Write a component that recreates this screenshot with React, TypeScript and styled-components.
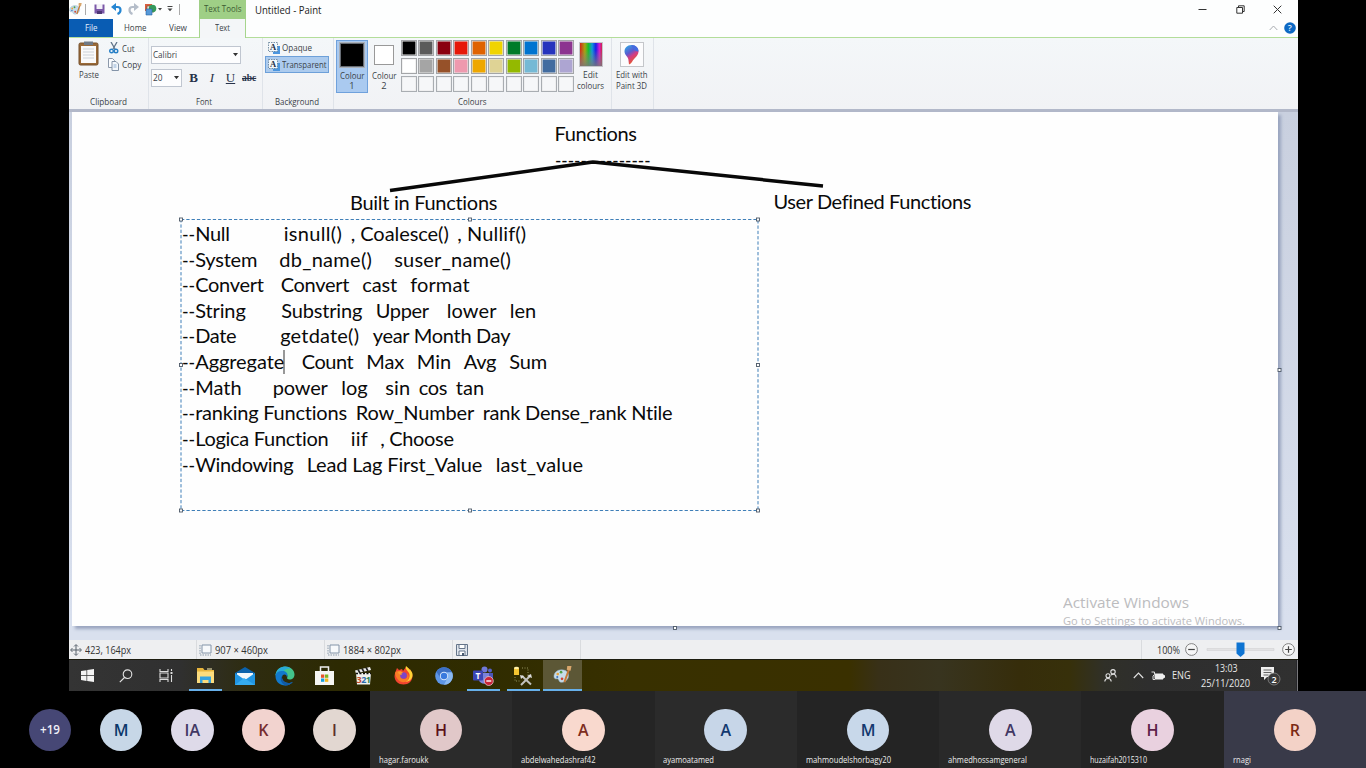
import React, { useLayoutEffect, useRef } from 'react';
import styled, { createGlobalStyle, css } from 'styled-components';

const Global = createGlobalStyle`
  * { box-sizing: border-box; }
  html, body { margin: 0; background: #000; overflow: hidden; }
  body { font-family: "Open Sans", "Noto Sans", sans-serif; font-size: 10px; color: #3a3f47; }
  svg { display: block; flex: none; }
`;

const FitBox = styled.span<{ $w: number }>`
  display: inline-block;
  width: ${(p) => p.$w}px;
  text-align: left;
  white-space: pre;
  flex: none;
`;
const FitSpan = styled.span`
  display: inline-block;
  white-space: pre;
  transform-origin: 0 50%;
`;

/* Text condensed or widened so that it takes exactly the given width. */
function Fit({ w, children }: { w: number; children: string }) {
  const ref = useRef<HTMLSpanElement>(null);
  useLayoutEffect(() => {
    const el = ref.current;
    if (!el) return;
    el.style.transform = 'none';
    el.style.transform = `scaleX(${w / el.getBoundingClientRect().width})`;
  }, [w, children]);
  return <FitBox $w={w}><FitSpan ref={ref}>{children}</FitSpan></FitBox>;
}

/* Text tracked so that it takes exactly the given width. */
function Tracked({ w, children }: { w: number; children: string }) {
  const ref = useRef<HTMLSpanElement>(null);
  useLayoutEffect(() => {
    const el = ref.current;
    if (!el) return;
    el.style.letterSpacing = '0px';
    const natural = el.getBoundingClientRect().width;
    el.style.letterSpacing = `${(w - natural) / children.length}px`;
  }, [w, children]);
  return <FitSpan ref={ref}>{children}</FitSpan>;
}

const Screen = styled.div`
  width: 1366px;
  height: 768px;
  display: flex;
  flex-direction: column;
  background: #000;
  overflow: hidden;
`;
const Desktop = styled.div`
  width: 1229px;
  height: 691px;
  margin-left: 69px;
  display: flex;
  flex-direction: column;
  flex: none;
  background: #fdfefe;
`;

/* ---- title bar and tabs ---- */
const Header = styled.div`
  display: flex;
  height: 38px;
  border-bottom: 1.5px solid #b3dd9a;
  flex: none;
`;
const HeaderLeft = styled.div`
  width: 130px;
  display: flex;
  flex-direction: column;
`;
const QuickBar = styled.div`
  height: 19px;
  display: flex;
  align-items: center;
`;
const QuickIcon = styled.div<{ $w: number }>`
  width: ${(p) => p.$w}px;
  display: flex;
  justify-content: center;
`;
const TabRow = styled.div`
  display: flex;
  height: 19px;
`;
const Tab = styled.div<{ $w: number; $file?: boolean }>`
  width: ${(p) => p.$w}px;
  height: 18px;
  display: flex;
  align-items: center;
  justify-content: center;
  font-size: 9.5px;
  ${(p) => p.$file && css`background: #095cb3; color: #e4effa;`}
`;
const ContextTab = styled.div`
  width: 47px;
  height: 38px;
  display: flex;
  flex-direction: column;
  text-align: center;
  flex: none;
`;
const ContextTitle = styled.div`
  height: 19px;
  line-height: 18px;
  background: #9fcf86;
  color: #3d5b33;
  font-size: 9.5px;
`;
const ContextName = styled.div`
  height: 19px;
  line-height: 18px;
  background: #f4f6f8;
  border: 1px solid #a6d58d;
  border-width: 0 1px;
  font-size: 9.5px;
`;
const Caption = styled.div`
  flex: 1;
  padding: 0 0 0 9px;
  line-height: 20px;
  font-size: 10.5px;
  color: #222;
`;
const WindowSide = styled.div`
  width: 104px;
  display: flex;
  flex-direction: column;
`;
const WindowButtons = styled.div`
  height: 19px;
  display: flex;
  justify-content: space-between;
  align-items: center;
  padding: 0 16px 0 4px;
`;
const HelpRow = styled.div`
  height: 18px;
  display: flex;
  justify-content: flex-end;
  align-items: center;
  gap: 6px;
  padding-right: 2.5px;
`;

/* ---- ribbon ---- */
const Ribbon = styled.div`
  height: 71px;
  display: flex;
  background: linear-gradient(#f4f7f9, #f1f2f5);
  flex: none;
`;
const Group = styled.div<{ $w: number }>`
  width: ${(p) => p.$w}px;
  border-right: 1px solid #dfe3e9;
  display: flex;
  flex-direction: column;
`;
const GroupBody = styled.div<{ $pad?: string }>`
  flex: 1;
  display: flex;
  padding: ${(p) => p.$pad ?? '2px 0 0'};
`;
const GroupLabel = styled.div<{ $shift?: number }>`
  height: 13px;
  line-height: 12px;
  text-align: center;
  font-size: 9.3px;
  margin-left: ${(p) => p.$shift ?? 0}px;
`;
const Column = styled.div<{ $w?: number; $gap?: number; $center?: boolean }>`
  width: ${(p) => (p.$w ? p.$w + 'px' : 'auto')};
  display: flex;
  flex-direction: column;
  gap: ${(p) => p.$gap ?? 0}px;
  align-items: ${(p) => (p.$center ? 'center' : 'stretch')};
  flex: none;
`;
const PasteLabel = styled.div`
  line-height: 17px;
  font-size: 9.5px;
`;
const SmallCommand = styled.div<{ $indent: number }>`
  display: flex;
  align-items: center;
  gap: 3px;
  height: 16px;
  padding-left: ${(p) => p.$indent}px;
  font-size: 9.5px;
`;
const BackgroundOption = styled.div<{ $on?: boolean }>`
  width: 64px;
  height: 17px;
  display: flex;
  align-items: center;
  gap: 1px;
  padding-left: 1px;
  font-size: 9.5px;
  border: 1px solid ${(p) => (p.$on ? '#6da0d9' : 'transparent')};
  background: ${(p) => (p.$on ? '#accbee' : 'transparent')};
`;
const Select = styled.div<{ $w: number }>`
  width: ${(p) => p.$w}px;
  height: 18px;
  border: 1px solid #c0c6d0;
  background: #fdfdfe;
  display: flex;
  align-items: center;
  justify-content: space-between;
  padding: 0 2px 1px 1px;
  font-size: 9.8px;
`;
const FontRow = styled.div`
  display: flex;
  align-items: center;
`;
const StyleKey = styled.span<{ $w: number; $kind: string }>`
  width: ${(p) => p.$w}px;
  text-align: center;
  font-family: "Liberation Serif", serif;
  font-size: 13px;
  color: #27324a;
  font-weight: ${(p) => (p.$kind === 'b' ? 700 : 400)};
  font-style: ${(p) => (p.$kind === 'i' ? 'italic' : 'normal')};
  ${(p) => p.$kind === 'u' && css`text-decoration: underline;`}
  ${(p) => p.$kind === 's' && css`font-size: 9.5px; font-weight: 700; text-decoration: line-through;`}
`;
const ColourButton = styled.div<{ $on?: boolean }>`
  width: 32px;
  height: 53px;
  border: 1px solid ${(p) => (p.$on ? '#6fa1dc' : 'transparent')};
  background: ${(p) => (p.$on ? '#aacaf0' : 'transparent')};
  display: flex;
  flex-direction: column;
  align-items: center;
  font-size: 9.3px;
  line-height: 10.7px;
  text-align: center;
  flex: none;
`;
const SwatchSlot = styled.div`
  height: 27px;
  display: flex;
  align-items: center;
  margin-bottom: 2.5px;
`;
const BigSwatch = styled.div<{ $s: number; $c: string; $edge: string }>`
  width: ${(p) => p.$s}px;
  height: ${(p) => p.$s}px;
  background: ${(p) => p.$c};
  border: 1px solid ${(p) => p.$edge};
  outline: ${(p) => (p.$s > 20 ? '1px solid #aab0b8' : 'none')};
`;
const Palette = styled.div`
  width: 174px;
  height: 52px;
  display: grid;
  grid-template: repeat(3, 1fr) / repeat(10, 1fr);
  gap: 1.6px 1.5px;
  margin: 0 1px 0 0.5px;
  flex: none;
`;
const Swatch = styled.div<{ $c?: string }>`
  border: 1px solid ${(p) => (p.$c ? '#a3a5a8' : '#a9adb2')};
  background: ${(p) => p.$c ?? '#f6f7f9'};
  box-shadow: inset 0 0 0 0.6px #e8e8e8;
`;
const TileCommand = styled.div<{ $w: number }>`
  width: ${(p) => p.$w}px;
  display: flex;
  flex-direction: column;
  align-items: center;
  font-size: 9.3px;
  line-height: 10.7px;
  text-align: center;
`;
const IconFrame = styled.div`
  width: 24px;
  height: 25px;
  margin: 2px 0 3px;
  border: 1px solid #c4c6ca;
  background: #fcfcfd;
  display: flex;
  align-items: center;
  justify-content: center;
`;

/* ---- drawing surface ---- */
const Work = styled.div`
  height: 531px;
  position: relative;
  background: linear-gradient(#c9d0df, #d9e0ee 96%);
  border-top: 3px solid #b2b8c9;
  padding-left: 3px;
  flex: none;
`;
const Paper = styled.div`
  width: 1206px;
  height: 514px;
  position: relative;
  background: #fefefe;
  box-shadow: 3px 3px 3px #9aa5bf;
  font-family: Lato, "Open Sans", sans-serif;
  font-size: 20px;
  line-height: 25.6px;
  color: #0a0a0a;
`;
const Sketch = styled.svg`
  position: absolute;
  left: 0;
  top: 0;
  overflow: visible;
`;
const Placed = styled.div<{ $x: number; $y: number }>`
  position: absolute;
  left: ${(p) => p.$x - 72}px;
  top: ${(p) => p.$y - 113}px;
  white-space: pre;
`;
const Watermark = styled.div`
  position: absolute;
  left: 991px;
  top: 480px;
  height: 34px;
  overflow: hidden;
  color: #bcbcbe;
  font-family: "Open Sans", sans-serif;
  font-size: 15px;
  line-height: 20px;
`;
const WatermarkSub = styled.div`
  font-size: 11.3px;
  line-height: 18px;
`;

/* ---- status bar ---- */
const Status = styled.div`
  height: 19px;
  display: flex;
  background: #eeeff1;
  font-size: 10.2px;
  color: #333;
  flex: none;
`;
const StatusCell = styled.div<{ $w?: number; $pad?: number }>`
  ${(p) => (p.$w ? `width: ${p.$w}px;` : 'flex: 1;')}
  padding-left: ${(p) => p.$pad ?? 3}px;
  border-right: 1px solid #d9dbde;
  display: flex;
  align-items: center;
  gap: 3px;
`;
const Zoom = styled.div`
  width: 156px;
  display: flex;
  align-items: center;
  gap: 5px;
  padding-left: 14.5px;
`;

/* ---- taskbar ---- */
const Taskbar = styled.div`
  height: 32px;
  display: flex;
  background: linear-gradient(90deg, #343434 0, #303030 110px, #2e2c10 180px, #2d2a02 270px, #302c00 420px, #383000 560px, #3a3000 780px, #383018 810px, #38341f 870px, #362d0b 950px, #37300a 1000px, #303028 1035px, #2e2e2e 1080px, #303030);
  border-top: 1px solid #1c1c10;
  flex: none;
`;
const TaskItem = styled.div<{ $w: number; $active?: boolean; $line?: number }>`
  width: ${(p) => p.$w}px;
  height: 31px;
  display: flex;
  flex-direction: column;
  align-items: center;
  justify-content: space-between;
  background: ${(p) => (p.$active ? '#5c5736' : 'transparent')};
  &::after {
    content: '';
    width: ${(p) => p.$line ?? 0}px;
    height: 2px;
    background: #67b0ea;
  }
`;
const TaskIcon = styled.div`
  height: 31px;
  margin-bottom: -2px;
  display: flex;
  align-items: center;
`;
const Tray = styled.div`
  margin-left: auto;
  width: 195px;
  display: flex;
  align-items: center;
  color: #e8e8e8;
  font-size: 10px;
  border-right: 1px solid #26262a;
`;
const TraySlot = styled.div<{ $w: number }>`
  width: ${(p) => p.$w}px;
  display: flex;
  justify-content: center;
  line-height: 14.5px;
  text-align: center;
`;
const PeekEdge = styled.div`
  width: 1px;
  height: 31px;
  background: #77777a;
`;

/* ---- meeting participants ---- */
const People = styled.div`
  height: 77px;
  display: flex;
  flex: none;
`;
const Overflow = styled.div`
  width: 370px;
  display: flex;
  padding-left: 14.5px;
`;
const PersonSlot = styled.div`
  width: 71.1px;
  display: flex;
  justify-content: center;
  padding-top: 17.5px;
`;
const Tile = styled.div<{ $bg: string }>`
  width: 142.3px;
  background: ${(p) => p.$bg};
  display: flex;
  flex-direction: column;
  align-items: center;
  padding-top: 17.5px;
  flex: none;
`;
const Avatar = styled.div<{ $bg: string; $fg: string; $small?: boolean }>`
  width: 42.6px;
  height: 42.6px;
  border-radius: 50%;
  background: ${(p) => p.$bg};
  color: ${(p) => p.$fg};
  display: flex;
  align-items: center;
  justify-content: center;
  font-size: ${(p) => (p.$small ? 12 : 16)}px;
  font-weight: 600;
  flex: none;
`;
const PersonName = styled.div`
  align-self: flex-start;
  padding-left: 8.8px;
  font-size: 8.6px;
  line-height: 18px;
  color: #ececec;
`;

const palette = [
  '#000000', '#5b5b5b', '#8a0010', '#e61809', '#df6200', '#f0d400', '#007b29', '#0074d0', '#2634bd', '#8c3490',
  '#ffffff', '#a5a5a5', '#965129', '#ee99ae', '#eea700', '#dfd395', '#94b900', '#75b9d5', '#426ca0', '#ada5d2',
];

type Chunk = [number, number, string];
const lines: Chunk[][] = [
  [[195.5, 229.5, 'Null'], [284, 342, 'isnull()'], [351, 448.5, ', Coalesce()'], [457.5, 526, ', Nullif()']],
  [[195.5, 257, 'System'], [279.5, 372, 'db_name()'], [394.5, 511, 'suser_name()']],
  [[195.5, 263.5, 'Convert'], [281, 349, 'Convert'], [362.5, 397, 'cast'], [410.5, 469.5, 'format']],
  [[195.5, 245.5, 'String'], [281.5, 362, 'Substring'], [376, 428.5, 'Upper'], [447, 496.5, 'lower'], [510, 536, 'len']],
  [[195.5, 236, 'Date'], [280.5, 359, 'getdate()'], [373, 510, 'year Month Day']],
  [[195.5, 284, 'Aggregate'], [302, 353, 'Count'], [366.5, 404, 'Max'], [417, 451, 'Min'], [464, 496, 'Avg'], [509.5, 547, 'Sum']],
  [[195.5, 241.5, 'Math'], [273, 327.5, 'power'], [341.5, 367.5, 'log'], [385.5, 410, 'sin'], [419, 447, 'cos'], [456, 484, 'tan']],
  [[195.5, 347, 'ranking Functions'], [356, 474, 'Row_Number'], [483, 672.5, 'rank Dense_rank Ntile']],
  [[195.5, 328.5, 'Logica Function'], [351, 368, 'iif'], [380.5, 453.5, ', Choose']],
  [[195.5, 293, 'Windowing'], [307, 482, 'Lead Lag First_Value'], [496, 583, 'last_value']],
];

const PaletteIcon = ({ s }: { s: number }) => (
  <svg width={s} height={s} viewBox="0 0 20 20">
    <path d="M9 4C4 4 1 7.500 1 11c0 2 1.500 3 3 2.500S6 15 7 16.500c1 1 4 1 6-.5 3-2 4-5 3-8S12 4 9 4z" fill="#c5dceb" stroke="#8fb0c4" strokeWidth=".6" />
    <circle cx="5" cy="8.500" r="1.400" fill="#e9a33c" /><circle cx="8.500" cy="6.500" r="1.400" fill="#51a04a" />
    <circle cx="4.500" cy="11.500" r="1.100" fill="#3970c0" /><circle cx="9.500" cy="13.500" r="1.400" fill="#cf4433" />
    <path d="M17 3 12 17" stroke="#c77a37" strokeWidth="2" /><path d="M15 0h4.500l-1 5-4-1z" fill="#d8a66c" />
  </svg>
);
const UndoIcon = ({ c, flip }: { c: string; flip?: boolean }) => (
  <svg width="11" height="12" viewBox="0 0 11 12"><g transform={flip ? 'translate(11 0) scale(-1 1)' : undefined}>
    <path d="M3 4h3.500c4 0 4 5.500 0 7" fill="none" stroke={c} strokeWidth="2.200" /><path d="M0 4 5 0v8z" fill={c} />
  </g></svg>
);
const Caret = () => <svg width="5" height="4" viewBox="0 0 5 4"><path d="M0 0h5L2.500 3.200z" fill="#333" /></svg>;
const LetterPic = () => (
  <svg width="14" height="14" viewBox="0 0 14 14">
    <path d="M6 5h7v8H6z" fill="#4b96df" />
    <path d="M1.500 1.500h9v9h-9z" fill="#f4f8fb" stroke="#5c7893" strokeWidth=".8" strokeDasharray="1.500 1" />
    <text x="3" y="9" fontFamily="Liberation Serif" fontWeight="700" fontSize="8.500" fill="#1d304a">A</text>
  </svg>
);
const SizeIcon = () => (
  <svg width="13" height="12" viewBox="0 0 13 12"><path d="M3 1h9v8H3z" fill="#f7f9fb" stroke="#8394a8" /><path d="M1 1v10h11" fill="none" stroke="#8b9aab" strokeDasharray="1.500 1" /></svg>
);
const ZoomButton = ({ plus }: { plus?: boolean }) => (
  <svg width="13" height="13" viewBox="0 0 13 13"><circle cx="6.500" cy="6.500" r="5.900" fill="#f6f6f6" stroke="#777" strokeWidth=".9" /><path d={plus ? 'M3.200 6.500h6.600M6.500 3.200v6.600' : 'M3.200 6.500h6.600'} stroke="#444" strokeWidth="1.200" /></svg>
);

const StartIcon = () => <svg width="13" height="13" viewBox="0 0 13 13"><path d="M0 2l5.500-.8v5H0zM6.200 1.100 13 0v6.200H6.200zM0 6.900h5.500v5L0 11.100zM6.200 6.900H13V13l-6.800-1z" fill="#f4f4f4" /></svg>;
const SearchIcon = () => <svg width="14" height="14" viewBox="0 0 14 14" fill="none" stroke="#e4e4e4" strokeWidth="1.100"><circle cx="8.500" cy="5.200" r="4.300" /><path d="M5.500 8.500.8 13.200" /></svg>;
const TaskViewIcon = () => <svg width="14" height="13" viewBox="0 0 14 13" fill="none" stroke="#dcdcdc" strokeWidth="1.100"><path d="M1 0v2.500h8V0M1 13v-2.500h8V13M1 4h8v5H1zM12.500 0v2M12.500 6v7" /><path d="M11.500 4h2" strokeWidth="2" /></svg>;
const ExplorerIcon = () => (
  <svg width="19" height="17" viewBox="0 0 19 17"><path d="M1 1h6l1.500 2H18v13H1z" fill="#e8b53c" /><path d="M1 4.500h17V16H1z" fill="#fbdc7d" /><path d="M4 16V9.500h11V16h-2.500v-3h-6v3z" fill="#35a3df" /><path d="M11 2h5" stroke="#fff1b5" /></svg>
);
const MailIcon = () => <svg width="20" height="18" viewBox="0 0 20 18"><path d="M0 6 10 0l10 6v11H0z" fill="#0b62ac" /><path d="M2 6h16v6H2z" fill="#f2f7fb" /><path d="M0 6l10 7 10-7v12H0z" fill="#2196e3" /><path d="M0 18 9 11l11 7z" fill="#35acf1" /></svg>;
const EdgeIcon = () => (
  <svg width="20" height="20" viewBox="0 0 20 20">
    <path d="M.5 10C.5 4 5 .5 10 .5c6 0 9.500 4 9.500 8 0 3-2 5-5 5-2 0-3-1-2.200-2.200C13 9 11 6.500 8 6.500c-4 0-7 1.500-7.500 3.500z" fill="#43c48c" />
    <path d="M.5 10C1 4 5 .5 10 .5c2.500 0 4.500.8 6 2C12 2 9 3 8 6.500 4 6.500 1 8 .5 10z" fill="#28a9d7" />
    <path d="M.5 10C1 6 4 5 7.500 5c3 0 5.500 2 5 5l-.7 1C12 8.500 9 7.500 7.500 9.500c-1.800 3 1.500 7.500 6 7.500 2 0 3.500-.7 4.700-1.300C16 18 13.500 19.500 10 19.500 5 19.500.5 16 .5 10z" fill="#1279cb" />
    <path d="M7.500 9.500c-1.800 3 1.500 7.500 6 7.500 2 0 3.500-.7 4.700-1.300C16 18 13.500 19.500 10.500 19.500 5.500 17.500 4.500 12 7.500 9.500z" fill="#115ba7" />
  </svg>
);
const StoreIcon = () => (
  <svg width="19" height="19" viewBox="0 0 19 19"><path d="M5.500 6V1h8v5" fill="none" stroke="#f0f0f0" strokeWidth="1.500" /><path d="M0 5h19v14H0z" fill="#f5f5f3" />
    <path d="M6 8.500h3.300v3.300H6z" fill="#e6532b" /><path d="M10 8.500h3.300v3.300H10z" fill="#7db51f" /><path d="M6 12.500h3.300v3.300H6z" fill="#169edb" /><path d="M10 12.500h3.300v3.300H10z" fill="#f5b51b" /></svg>
);
const ClapperIcon = () => (
  <svg width="18" height="18" viewBox="0 0 18 18"><path d="M1 6h15l-1 11.500H2z" fill="#f0f0ec" /><path d="M0 3.500 15 0l1 3L1 6.500z" fill="#ececec" /><path d="m3 2.500 2 3.500M7 1.500l2 3.500M11 .5l2 3.500" stroke="#222" strokeWidth="1.600" /><path d="M1 6.500h15" stroke="#111" strokeWidth="1.500" strokeDasharray="2 1.500" />
    <text x="1.600" y="15.800" fontFamily="Open Sans" fontWeight="700" fontSize="9" fill="#c34a2b">3</text><text x="6.300" y="15.800" fontFamily="Open Sans" fontWeight="700" fontSize="9" fill="#2b6cae">2</text><text x="10.700" y="15.800" fontFamily="Open Sans" fontWeight="700" fontSize="9" fill="#2c8152">1</text></svg>
);
const FirefoxIcon = () => (
  <svg width="19" height="19" viewBox="0 0 19 19"><path d="M1 7 3 2l2 2 3-1 1 2 3-4c3 1 5 3 6 6l.5 3c0 5-4 8.500-9 8.500S.5 15 .5 10z" fill="#f2452f" /><path d="M12 0c-1 3 1 4 3 7 2 4-1 8-4 9 5 0 8-4 7.500-8-.5-3-2-3-2.500-5-.5 1-.5 1-.5 1C15 2 13 1 12 0z" fill="#ffd335" /><path d="M1 7c1-2 3-3 6-1-1 1-1 2 1 2-2 1-1 5 2 5s4-3 3-6c3 3 2 8-2 9-5 1-9-3-10-9z" fill="#f97d25" /><circle cx="9.500" cy="9.500" r="3.300" fill="#7c46c8" /><path d="M4 6c1-1 4-1 5 1-2 0-2 1-1 2-2 0-4-1-4-3z" fill="#ff9c2a" /></svg>
);
const ChromiumIcon = () => (
  <svg width="18" height="18" viewBox="0 0 18 18"><circle cx="9" cy="9" r="8.800" fill="#5d96e6" /><path d="M9 .2A8.800 8.800 0 0 0 1.300 4.800L5.500 11 9 5h7.800A8.800 8.800 0 0 0 9 .2z" fill="#3c70c4" /><path d="M9 17.800 12.500 11 13 9l-.8-3.500h4.900A8.800 8.800 0 0 1 9 17.800z" fill="#8ab9f2" /><circle cx="9" cy="9" r="4.200" fill="#d5e5fa" /><circle cx="9" cy="9" r="3.200" fill="#397ade" /></svg>
);
const TeamsIcon = () => (
  <svg width="21" height="20" viewBox="0 0 21 20"><circle cx="11.500" cy="3.500" r="3" fill="#6f78d8" /><circle cx="17" cy="4.500" r="2" fill="#5661c8" /><path d="M14 7h6v7l-3 2h-3z" fill="#4c56b8" /><path d="M6 7h10v7c0 5-9 5-10 0z" fill="#7a82dc" /><rect x="0" y="4.500" width="10" height="10" rx="1" fill="#3a45b4" /><text x="2.600" y="12.500" fontFamily="Open Sans" fontWeight="700" fontSize="8.500" fill="#fff">T</text><circle cx="15.800" cy="15" r="4.500" fill="#c9243a" stroke="#e6d5d8" strokeWidth=".7" /><path d="M13.300 15h5" stroke="#fff" strokeWidth="1.400" /></svg>
);
const ServerIcon = () => (
  <svg width="20" height="20" viewBox="0 0 20 20"><path d="M1 2h5v7H1z" fill="#f4c431" /><ellipse cx="3.500" cy="2" rx="2.500" ry="1.200" fill="#fff0a6" /><path d="M9 2h6v7M2 11v4h5" fill="none" stroke="#93935d" strokeDasharray="1 1.500" /><path d="m9 10 9 8.500M17 10 8 19" stroke="#c2c2bd" strokeWidth="2" /><path d="m14 10 4-2 1 4M7 9l4 1-3 3z" fill="#ddd" /></svg>
);

export default function App() {
  return (
    <>
      <Global />
      <Screen>
        <Desktop>
          <Header>
            <HeaderLeft>
              <QuickBar>
                <QuickIcon $w={13}><PaletteIcon s={13} /></QuickIcon>
                <QuickIcon $w={6}><svg width="1" height="11"><path d="M.5 0v11" stroke="#aaa" /></svg></QuickIcon>
                <QuickIcon $w={23}><svg width="11" height="10" viewBox="0 0 11 10"><path d="M.5.5h10v9H.5z" fill="#7b58a8" /><path d="M2.500 0h6v5h-6z" fill="#f4f2f8" /><path d="M3 7h5v3H3z" fill="#4d3774" /></svg></QuickIcon>
                <QuickIcon $w={11}><UndoIcon c="#2586d2" /></QuickIcon>
                <QuickIcon $w={22}><UndoIcon c="#b4bdc9" flip /></QuickIcon>
                <QuickIcon $w={12}><svg width="13" height="13" viewBox="0 0 13 13"><path d="M1 1h7v7H1z" fill="#d95e3e" /><path d="M3 3h7v6H3z" fill="#f3eee8" stroke="#77513e" strokeWidth=".7" /><circle cx="8.500" cy="5.500" r="3.800" fill="#35995b" /><path d="M2 6h6v6H2z" fill="#5598d8" stroke="#2965a5" strokeWidth=".6" /></svg></QuickIcon>
                <QuickIcon $w={7}><svg width="4" height="3" viewBox="0 0 4 3"><path d="M0 0h4L2 2.500z" fill="#444" /></svg></QuickIcon>
                <QuickIcon $w={13}><svg width="6" height="6" viewBox="0 0 6 6"><path d="M.5.5h5" stroke="#444" /><path d="M.5 2.500h5L3 5.300z" fill="#444" /></svg></QuickIcon>
                <QuickIcon $w={7}><svg width="1" height="11"><path d="M.5 0v11" stroke="#aaa" /></svg></QuickIcon>
              </QuickBar>
              <TabRow>
                <Tab $w={44} $file><Fit w={12.5}>File</Fit></Tab>
                <Tab $w={44}><Fit w={22.5}>Home</Fit></Tab>
                <Tab $w={41}><Fit w={18}>View</Fit></Tab>
              </TabRow>
            </HeaderLeft>
            <ContextTab>
              <ContextTitle><Fit w={37.5}>Text Tools</Fit></ContextTitle>
              <ContextName><Fit w={15}>Text</Fit></ContextName>
            </ContextTab>
            <Caption><Fit w={66.500}>Untitled - Paint</Fit></Caption>
            <WindowSide>
              <WindowButtons>
                <svg width="9" height="9" viewBox="0 0 9 9"><path d="M.5 4.500h8" stroke="#333" /></svg>
                <svg width="9" height="9" viewBox="0 0 9 9" fill="none" stroke="#333"><path d="M.8 2.500h5.700v5.700H.8zM2.500 2.500V.8h5.700v5.700H6.500" /></svg>
                <svg width="9" height="9" viewBox="0 0 9 9"><path d="m.7.7 7.600 7.600m0-7.600L.7 8.300" stroke="#333" /></svg>
              </WindowButtons>
              <HelpRow>
                <svg width="9" height="6" viewBox="0 0 9 6"><path d="m.7 5 3.800-4 3.800 4" fill="none" stroke="#a7abb0" /></svg>
                <svg width="12" height="12" viewBox="0 0 12 12"><circle cx="6" cy="6" r="5.800" fill="#0d69c4" /><text x="3.700" y="9.200" fontFamily="Open Sans" fontWeight="600" fontSize="9" fill="#e4f0fa">?</text></svg>
              </HelpRow>
            </WindowSide>
          </Header>

          <Ribbon>
            <Group $w={80}>
              <GroupBody $pad="2px 0 0 8px">
                <Column $w={23} $center>
                  <svg width="21" height="26" viewBox="0 0 21 26"><rect x="1" y="3" width="19" height="22" rx="1.500" fill="#9a6a38" stroke="#74502d" /><path d="M3 6h15v17H3z" fill="#fafafa" /><path d="M6 1.500h9V5H6z" fill="#707a86" /><path d="M5 9h11M5 12h11M5 15h11M5 18h11" stroke="#cdd2d8" /></svg>
                  <PasteLabel><Fit w={20}>Paste</Fit></PasteLabel>
                </Column>
                <Column $gap={0.5}>
                  <SmallCommand $indent={9}><svg width="10" height="12" viewBox="0 0 10 12" fill="none"><path d="M2 0l4 7M8 0 4 7" stroke="#60758b" strokeWidth="1.300" /><circle cx="2.500" cy="9" r="1.800" stroke="#287fc6" strokeWidth="1.400" /><circle cx="7" cy="9" r="1.800" stroke="#287fc6" strokeWidth="1.400" /></svg><Fit w={12.5}>Cut</Fit></SmallCommand>
                  <SmallCommand $indent={8}><svg width="11" height="13" viewBox="0 0 11 13"><path d="M.5.5h4l2 2v7h-6z" fill="#fafcff" stroke="#8c99aa" /><path d="M4 3.500h4l2.500 2.500v6.500H4z" fill="#f4f7fb" stroke="#8494a9" /><path d="M5.500 7h3M5.500 9h3" stroke="#8fb0d5" /></svg><Fit w={19.5}>Copy</Fit></SmallCommand>
                </Column>
              </GroupBody>
              <GroupLabel $shift={-1}><Fit w={37}>Clipboard</Fit></GroupLabel>
            </Group>
            <Group $w={114}>
              <GroupBody $pad="8px 0 0 2px">
                <Column $gap={5}>
                  <Select $w={90}><Fit w={24}>Calibri</Fit><Caret /></Select>
                  <FontRow>
                    <Select $w={31}><Fit w={9.500}>20</Fit><Caret /></Select>
                    <StyleKey $w={23} $kind="b">B</StyleKey>
                    <StyleKey $w={14} $kind="i">I</StyleKey>
                    <StyleKey $w={23} $kind="u">U</StyleKey>
                    <StyleKey $w={14} $kind="s">abc</StyleKey>
                  </FontRow>
                </Column>
              </GroupBody>
              <GroupLabel $shift={-3}><Fit w={16}>Font</Fit></GroupLabel>
            </Group>
            <Group $w={71}>
              <GroupBody $pad="1px 0 0 2px">
                <Column>
                  <BackgroundOption><LetterPic /><Fit w={30}>Opaque</Fit></BackgroundOption>
                  <BackgroundOption $on><LetterPic /><Fit w={44.500}>Transparent</Fit></BackgroundOption>
                </Column>
              </GroupBody>
              <GroupLabel $shift={-3}><Fit w={44}>Background</Fit></GroupLabel>
            </Group>
            <Group $w={278}>
              <GroupBody $pad="2px 0 0 2px">
                <ColourButton $on>
                  <SwatchSlot><BigSwatch $s={24} $c="#000" $edge="#676d75" /></SwatchSlot>
                  <Fit w={24.500}>Colour</Fit>1
                </ColourButton>
                <ColourButton>
                  <SwatchSlot><BigSwatch $s={20} $c="#fff" $edge="#999" /></SwatchSlot>
                  <Fit w={24.500}>Colour</Fit>2
                </ColourButton>
                <Palette>
                  {Array.from({ length: 30 }, (_, i) => <Swatch key={i} $c={palette[i]} />)}
                </Palette>
                <TileCommand $w={30}>
                  <IconFrame>
                    <svg width="22" height="23" viewBox="0 0 22 23"><defs><linearGradient id="spectrum"><stop offset="0" stopColor="#d32818" /><stop offset=".22" stopColor="#a7a510" /><stop offset=".38" stopColor="#18bd2c" /><stop offset=".55" stopColor="#1098d9" /><stop offset=".72" stopColor="#181ee8" /><stop offset=".88" stopColor="#d41bd0" /><stop offset="1" stopColor="#cf2646" /></linearGradient><linearGradient id="fade" x2="0" y2="1"><stop offset=".3" stopColor="#888" stopOpacity="0" /><stop offset="1" stopColor="#777" stopOpacity=".85" /></linearGradient></defs><path d="M0 0h22v23H0z" fill="url(#spectrum)" /><path d="M0 0h22v23H0z" fill="url(#fade)" /></svg>
                  </IconFrame>
                  <Fit w={15}>Edit</Fit><Fit w={27}>colours</Fit>
                </TileCommand>
              </GroupBody>
              <GroupLabel $shift={-1}><Fit w={28.500}>Colours</Fit></GroupLabel>
            </Group>
            <Group $w={42}>
              <GroupBody>
                <TileCommand $w={39}>
                  <IconFrame>
                    <svg width="15" height="22" viewBox="0 0 15 22"><defs><linearGradient id="drop" x2=".5" y2="1"><stop offset="0" stopColor="#28b5e8" /><stop offset=".45" stopColor="#5b5bd0" /><stop offset=".65" stopColor="#d13c86" /><stop offset="1" stopColor="#e95a24" /></linearGradient></defs><path d="M7.500 1C3 1 .5 4 .5 7.500c0 4 4 5 4 9l.5 4c3-1 3-3.500 5.500-6C13 12 14.500 10 14.500 7.500 14.500 4 12 1 7.500 1z" fill="url(#drop)" /><path d="M7.500 1c4.500 0 7 3 7 6.500-3 0-6-2-7-6.500z" fill="#456be0" /></svg>
                  </IconFrame>
                  <Fit w={31.500}>Edit with</Fit><Fit w={31}>Paint 3D</Fit>
                </TileCommand>
              </GroupBody>
            </Group>
          </Ribbon>

          <Work>
            <Paper>
              <Placed $x={554.5} $y={122}><Tracked w={82.5}>Functions</Tracked></Placed>
              <Placed $x={554.5} $y={147.500}><Fit w={95.5}>---------------</Fit></Placed>
              <Placed $x={350} $y={190.5}><Tracked w={147.5}>Built in Functions</Tracked></Placed>
              <Placed $x={773.5} $y={190}><Tracked w={197.5}>User Defined Functions</Tracked></Placed>
              {lines.map((row, i) => (
                <React.Fragment key={i}>
                  <Placed $x={182} $y={222 + i * 25.62}><Fit w={13.200}>--</Fit></Placed>
                  {row.map(([x, end, text]) => (
                    <Placed key={x} $x={x - 0.3} $y={222 + i * 25.62}><Tracked w={end - x + 0.5}>{text}</Tracked></Placed>
                  ))}
                </React.Fragment>
              ))}
              <Sketch width="1206" height="514" viewBox="72 112 1206 514">
                <path d="m390 190.500 203-28.500 230 24" fill="none" stroke="#080808" strokeWidth="3.500" />
                <path d="M181 219.500h577v291H181z" fill="none" stroke="#3f7fb8" strokeDasharray="3.300 2" />
                <path d="M284 350v24" stroke="#333" />
                {[[181, 219.5], [470, 219.5], [758, 219.5], [181, 365], [758, 365], [181, 510.5], [470, 510.5], [758, 510.5], [675, 628], [1279.500, 628], [1279.500, 370]].map(([x, y]) => (
                  <rect key={`${x}-${y}`} x={x - 1.5} y={y - 1.5} width="3" height="3" fill="#fff" stroke="#4c5866" strokeWidth=".9" />
                ))}
              </Sketch>
              <Watermark>
                <Fit w={126}>Activate Windows</Fit>
                <WatermarkSub><Fit w={182}>Go to Settings to activate Windows.</Fit></WatermarkSub>
              </Watermark>
            </Paper>
          </Work>

          <Status>
            <StatusCell $w={127.500} $pad={1}>
              <svg width="12" height="12" viewBox="0 0 12 12"><path d="M6 1v10M1 6h10" stroke="#56606b" /><path d="m4 2.500 2-2 2 2M4 9.500l2 2 2-2M2.500 4l-2 2 2 2M9.500 4l2 2-2 2" fill="none" stroke="#56606b" strokeWidth=".9" /></svg>
              <Fit w={46}>423, 164px</Fit>
            </StatusCell>
            <StatusCell $w={128} $pad={2.500}><SizeIcon /><Fit w={53}>907 × 460px</Fit></StatusCell>
            <StatusCell $w={128} $pad={2.500}><SizeIcon /><Fit w={58}>1884 × 802px</Fit></StatusCell>
            <StatusCell $w={128}>
              <svg width="12" height="12" viewBox="0 0 12 12"><path d="M.5.5h11v11H.5z" fill="#dfe5ed" stroke="#65758a" /><path d="M3 .5h6v4H3zM3 7h6v4.500H3z" fill="#fff" stroke="#65758a" /><path d="M6 9h2v3H6z" fill="#4a5a70" /></svg>
            </StatusCell>
            <StatusCell />
            <Zoom>
              <Fit w={23}>100%</Fit>
              <svg width="116" height="16" viewBox="0 0 116 16">
                <path d="M22 6.500h67v2H22z" fill="#e2e2e4" stroke="#d2d2d4" strokeWidth=".6" />
                <path d="M51.500 .5h8v11l-4 3.500-4-3.500z" fill="#0e74d2" />
                <g transform="translate(0 1)"><ZoomButton /></g><g transform="translate(97 1)"><ZoomButton plus /></g>
              </svg>
            </Zoom>
          </Status>

          <Taskbar>
            <TaskItem $w={37.500}><TaskIcon><StartIcon /></TaskIcon></TaskItem>
            <TaskItem $w={39}><TaskIcon><SearchIcon /></TaskIcon></TaskItem>
            <TaskItem $w={40.200}><TaskIcon><TaskViewIcon /></TaskIcon></TaskItem>
            <TaskItem $w={39.700} $line={33}><TaskIcon><ExplorerIcon /></TaskIcon></TaskItem>
            <TaskItem $w={39.700}><TaskIcon><MailIcon /></TaskIcon></TaskItem>
            <TaskItem $w={39.700}><TaskIcon><EdgeIcon /></TaskIcon></TaskItem>
            <TaskItem $w={39.700}><TaskIcon><StoreIcon /></TaskIcon></TaskItem>
            <TaskItem $w={39.700}><TaskIcon><ClapperIcon /></TaskIcon></TaskItem>
            <TaskItem $w={39.700}><TaskIcon><FirefoxIcon /></TaskIcon></TaskItem>
            <TaskItem $w={39.700}><TaskIcon><ChromiumIcon /></TaskIcon></TaskItem>
            <TaskItem $w={39.900} $line={33}><TaskIcon><TeamsIcon /></TaskIcon></TaskItem>
            <TaskItem $w={39.900} $line={33}><TaskIcon><ServerIcon /></TaskIcon></TaskItem>
            <TaskItem $w={39} $line={39} $active><TaskIcon><PaletteIcon s={19} /></TaskIcon></TaskItem>
            <Tray>
              <TraySlot $w={17}><svg width="13" height="13" viewBox="0 0 13 13" fill="none" stroke="#e2e2e2" strokeWidth="1.100"><circle cx="9" cy="2.800" r="2.200" /><circle cx="4" cy="6.800" r="2" /><path d="M.8 12.500C1 8.500 7 8.500 7.200 12.500M7 6.200c2-2 5-1 5.200 2.300" /></svg></TraySlot>
              <TraySlot $w={39}><svg width="11" height="7" viewBox="0 0 11 7"><path d="m.8 6 4.700-5 4.700 5" fill="none" stroke="#e2e2e2" strokeWidth="1.100" /></svg></TraySlot>
              <TraySlot $w={0}><svg width="14" height="10" viewBox="0 0 14 10"><path d="M4 3h8v5H4zM12 4.500h1.500v2H12z" fill="#eee" stroke="#eee" /><path d="M.5 1h3v2.500L2 5v3.500h2" stroke="#ddd" fill="#333" /></svg></TraySlot>
              <TraySlot $w={48}><Fit w={18.500}>ENG</Fit></TraySlot>
              <TraySlot $w={41}><div><Fit w={22.500}>13:03</Fit><br /><Fit w={49}>25/11/2020</Fit></div></TraySlot>
              <TraySlot $w={50}><svg width="20" height="20" viewBox="0 0 20 20"><path d="M0 1h13v10H6l-3 3v-3H0z" fill="#eee" /><path d="M2.500 4h8M2.500 6.500h8M2.500 9h5" stroke="#555" strokeWidth=".9" /><circle cx="13" cy="13" r="6" fill="#393939" stroke="#888" strokeWidth=".8" /><text x="10.500" y="16.500" fontFamily="Open Sans" fontWeight="600" fontSize="9" fill="#fff">2</text></svg></TraySlot>
            </Tray>
            <PeekEdge />
          </Taskbar>
        </Desktop>

        <People>
          <Overflow>
            <PersonSlot><Avatar $bg="#464775" $fg="#f0f0f8" $small><Fit w={20}>+19</Fit></Avatar></PersonSlot>
            <PersonSlot><Avatar $bg="#c7d7e7" $fg="#0b376a">M</Avatar></PersonSlot>
            <PersonSlot><Avatar $bg="#dedae9" $fg="#413763">IA</Avatar></PersonSlot>
            <PersonSlot><Avatar $bg="#f2d3cf" $fg="#762c30">K</Avatar></PersonSlot>
            <PersonSlot><Avatar $bg="#e2d7d1" $fg="#5d302a">I</Avatar></PersonSlot>
          </Overflow>
          <Tile $bg="#2b2b2b"><Avatar $bg="#e1c8c9" $fg="#5c1218">H</Avatar><PersonName><Fit w={49.500}>hagar.faroukk</Fit></PersonName></Tile>
          <Tile $bg="#252525"><Avatar $bg="#f9d9ce" $fg="#7d2d20">A</Avatar><PersonName><Fit w={74.500}>abdelwahedashraf42</Fit></PersonName></Tile>
          <Tile $bg="#2b2b2b"><Avatar $bg="#c7d6e8" $fg="#12386f">A</Avatar><PersonName><Fit w={51}>ayamoatamed</Fit></PersonName></Tile>
          <Tile $bg="#242424"><Avatar $bg="#c8d8ea" $fg="#12386f">M</Avatar><PersonName><Fit w={85}>mahmoudelshorbagy20</Fit></PersonName></Tile>
          <Tile $bg="#292929"><Avatar $bg="#dfd9e8" $fg="#413763">A</Avatar><PersonName><Fit w={79}>ahmedhossamgeneral</Fit></PersonName></Tile>
          <Tile $bg="#242424"><Avatar $bg="#e9d1df" $fg="#5d2148">H</Avatar><PersonName><Fit w={57}>huzaifah2015310</Fit></PersonName></Tile>
          <Tile $bg="#393a49"><Avatar $bg="#f3d2c7" $fg="#7b2a13">R</Avatar><PersonName><Fit w={18}>rnagi</Fit></PersonName></Tile>
        </People>
      </Screen>
    </>
  );
}
